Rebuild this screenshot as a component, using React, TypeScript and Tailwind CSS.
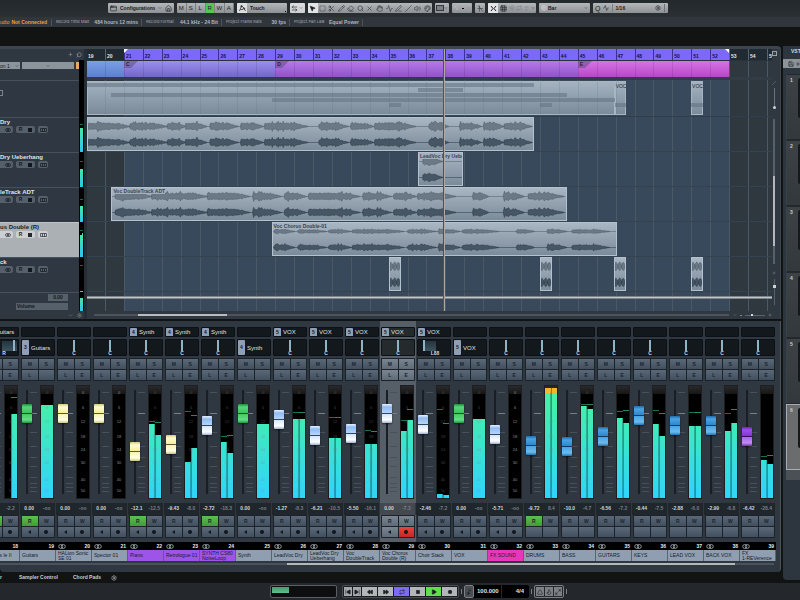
import React from 'react';
import {
  Activity, AppWindow, ArrowLeftRight, ChevronDown, Circle, Eraser, FastForward, Flame, Grid3x3, Hand, Home,
  Magnet, Maximize2, MousePointer2, Music2, Palette, PenLine, Pencil, Play, Plus, Repeat, Rewind,
  Save, Scissors, Search, Settings, SkipBack, SkipForward, Slash, Square, SquareDashed, Triangle, Type, Volume2, X,
} from 'lucide-react';

// Visible part of the timeline, in bars
const FIRST = 19.05;
const LAST = 55.27;
const BAR_PX = 19;
const BARS = Array.from({ length: 37 }, (_, i) => 19 + i);

const pct = (bar: number) => `${((bar - FIRST) / (LAST - FIRST)) * 100}%`;
const span = (from: number, to: number) => ({ left: pct(Math.max(from, FIRST)), width: `${((to - Math.max(from, FIRST)) / (LAST - FIRST)) * 100}%` });

type Clip = { from: number; to: number; title?: string; amp: [number, number]; segs: number[][] };
type Track = { name: string; level: number[]; peak: number; selected?: boolean; clips: Clip[] };

const SHORT = [[0, 4], [4, 8], [8, 12]];

const TRACKS: Track[] = [
  {
    name: 'Dry', level: [24, 24], peak: 7,
    clips: [{
      from: 19.05, to: 42.7, amp: [4, 4],
      segs: [[0, 42], [42, 80], [80, 98], [98, 120], [123, 152], [154, 177], [178, 222], [233, 263], [265, 288], [289, 331], [344, 364], [375, 397], [399, 420], [420, 448]],
    }],
  },
  {
    name: 'Dry Ueberhang', level: [18, 18], peak: 9,
    clips: [{ from: 36.55, to: 38.95, title: 'LeadVoc Dry Uebe', amp: [4, 4], segs: [[4, 25]] }],
  },
  {
    name: 'leTrack ADT', level: [16, 16], peak: 12,
    clips: [{
      from: 20.34, to: 44.42, title: 'Voc DoubleTrack ADT', amp: [4, 4],
      segs: [[3, 40], [40, 96], [96, 139], [142, 171], [174, 196], [198, 250], [253, 282], [284, 307], [308, 347], [364, 380], [395, 416], [420, 456]],
    }],
  },
  {
    name: 'us Double (R)', level: [22, 24], peak: 8, selected: true,
    clips: [{
      from: 28.81, to: 47.06, title: 'Voc Chorus Double-01', amp: [2, 3],
      segs: [[1, 22], [25, 54], [56, 79], [80, 132], [136, 165], [167, 189], [191, 228], [246, 264], [277, 297], [302, 340]],
    }],
  },
  {
    name: 'ck', level: [1, 1], peak: 8,
    clips: [
      { from: 35, to: 35.63, amp: [5, 5], segs: SHORT },
      { from: 42.99, to: 43.62, amp: [5, 5], segs: SHORT },
      { from: 46.94, to: 47.57, amp: [5, 5], segs: SHORT },
      { from: 50.99, to: 51.62, amp: [5, 5], segs: SHORT },
    ],
  },
];

const SECTIONS = [
  { from: 19.05, to: 21, tag: '', color: 'from-[#7c9ee8] to-[#5c80cc]' },
  { from: 21, to: 29, tag: 'C', color: 'from-[#9b90ee] to-[#7266c8]' },
  { from: 29, to: 45, tag: 'D', color: 'from-[#b878ea] to-[#8d55c8]' },
  { from: 45, to: 53, tag: 'E', color: 'from-[#d873e6] to-[#b548c8]' },
];

const FOLDER_PARTS = [
  { from: 19.05, to: 42.7, y: 'top-[3px]' },
  { from: 36.55, to: 38.95, y: 'top-[8px]' },
  { from: 20.34, to: 44.42, y: 'top-[13px]' },
  { from: 28.81, to: 46.95, y: 'top-[18px]' },
  { from: 35, to: 35.63, y: 'top-[23px]' },
  { from: 42.99, to: 43.62, y: 'top-[23px]' },
  { from: 46.95, to: 47.56, y: 'top-[23px]' },
  { from: 50.99, to: 51.6, y: 'top-[23px]' },
];

type Channel = {
  no: number; name: string; fader: number; color: string; vol: string; pk: string;
  l?: number; r?: number; pl?: number; pr?: number; link?: string[]; folder?: string[];
  pan?: number; panText?: string; read?: boolean; rec?: boolean; selected?: boolean; fx?: boolean; clip?: boolean; tint?: string;
};

const SYNTH = ['4', 'Synth'];
const VOX = ['5', 'VOX'];
const PURPLE = 'bg-[#9c55e8]';

// fader, l/r and pl/pr are heights above the bottom of the strip
const CHANNELS: Channel[] = [
  { no: 18, name: 'Guitars le II', fader: 76, color: 'yellow', vol: '0.00', pk: '-2.2', l: 0, r: 84, pr: 100, link: ['3', 'Guitars'], pan: 97, panText: 'R', read: true },
  { no: 19, name: 'Guitars', fader: 76, color: 'green', vol: '0.00', pk: '-oo', l: 93, folder: ['3', 'Guitars'], read: true },
  { no: 20, name: 'HALion Sonic SE 01', fader: 76, color: 'yellow', vol: '0.00', pk: '-oo' },
  { no: 21, name: 'Spector 01', fader: 76, color: 'yellow', vol: '0.00', pk: '-oo' },
  { no: 22, name: 'Piano', fader: 38, color: 'yellow', vol: '-12.1', pk: '-12.5', l: 74, r: 63, pl: 76, pr: 75, link: SYNTH, read: true, tint: PURPLE },
  { no: 23, name: 'Retrologue 01', fader: 45, color: 'yellow', vol: '-9.43', pk: '-8.0', l: 36, r: 50, pl: 86, pr: 82, link: SYNTH, tint: PURPLE },
  { no: 24, name: 'SYNTH CS80 NoiseLoop', fader: 64, color: 'sky', vol: '-2.72', pk: '-18.3', l: 56, r: 45, pl: 61, pr: 62, link: SYNTH, read: true, tint: PURPLE },
  { no: 25, name: 'Synth', fader: 76, color: 'green', vol: '0.00', pk: '-oo', l: 74, folder: SYNTH },
  { no: 26, name: 'LeadVoc Dry', fader: 70, color: 'sky', vol: '-1.27', pk: '-8.3', l: 79, r: 79, pl: 85, pr: 85, link: VOX },
  { no: 27, name: 'LeadVoc Dry Ueberhang', fader: 54, color: 'sky', vol: '-6.21', pk: '-10.5', l: 60, r: 60, pl: 80, pr: 80, link: VOX },
  { no: 28, name: 'Voc DoubleTrack', fader: 56, color: 'sky', vol: '-5.50', pk: '-16.1', l: 54, r: 54, pl: 67, pr: 66, link: VOX },
  { no: 29, name: 'Voc Chorus Double (R)', fader: 76, color: 'sky', vol: '0.00', pk: '-7.3', l: 67, r: 78, pl: 77, pr: 88, link: VOX, rec: true, selected: true },
  { no: 30, name: 'Choir Stack', fader: 65, color: 'sky', vol: '-2.46', pk: '-7.2', l: 4, r: 3, pl: 88, pr: 74, link: VOX, pan: 12, panText: 'L88' },
  { no: 31, name: 'VOX', fader: 76, color: 'green', vol: '0.00', pk: '-oo', l: 79, folder: VOX },
  { no: 32, name: 'FX SOUND', fader: 55, color: 'sky', vol: '-5.71', pk: '-oo', tint: 'bg-[#e838b8]' },
  { no: 33, name: 'DRUMS', fader: 44, color: 'blue', vol: '-9.72', pk: '8.4', l: 110, r: 110, read: true, fx: true, clip: true },
  { no: 34, name: 'BASS', fader: 43, color: 'blue', vol: '-10.0', pk: '-4.7', l: 92, r: 89, pl: 93, pr: 93, fx: true },
  { no: 35, name: 'GUITARS', fader: 53, color: 'blue', vol: '-6.56', pk: '-7.2', l: 80, r: 75, pl: 86, pr: 87, fx: true },
  { no: 36, name: 'KEYS', fader: 74, color: 'blue', vol: '-0.44', pk: '-7.5', l: 74, r: 62, pl: 87, pr: 84, fx: true },
  { no: 37, name: 'LEAD VOX', fader: 64, color: 'blue', vol: '-2.88', pk: '-6.0', l: 72, r: 72, pl: 85, pr: 85, fx: true },
  { no: 38, name: 'BACK VOX', fader: 64, color: 'blue', vol: '-2.99', pk: '-6.8', l: 67, r: 75, pl: 84, pr: 88, fx: true },
  { no: 39, name: 'FX\n1-REVerence', fader: 53, color: 'purple', vol: '-6.42', pk: '-28.4', l: 38, r: 34, pl: 41, pr: 42, fx: true },
];

const THUMBS: Record<string, string> = {
  green: '[&::-webkit-slider-thumb]:bg-[linear-gradient(#1f8a40,#54d678_16%,#3fbf60_46%,#145528_47%,#145528_53%,#45c968_54%,#5ee084_84%,#238f45)]',
  yellow: '[&::-webkit-slider-thumb]:bg-[linear-gradient(#d8cc78,#fffbd0_16%,#f6ef9c_46%,#5c5830_47%,#5c5830_53%,#f8f3b4_54%,#ffffe4_84%,#cfc67c)]',
  sky: '[&::-webkit-slider-thumb]:bg-[linear-gradient(#e8f2ff,#8fbcf4_16%,#b4d4fa_46%,#33465c_47%,#33465c_53%,#d4e6fb_54%,#ffffff_84%,#a0b4d4)]',
  blue: '[&::-webkit-slider-thumb]:bg-[linear-gradient(#1f6cab,#4aa3e2_16%,#2f88cc_46%,#103a5c_47%,#103a5c_53%,#4ba4e0_54%,#6bbcf0_84%,#2674b0)]',
  purple: '[&::-webkit-slider-thumb]:bg-[linear-gradient(#6a28b4,#9e50ee_16%,#8134d4_46%,#34105c_47%,#34105c_53%,#a866ee_54%,#c08cf6_84%,#6e34ac)]',
};

const SCALE = [['0', 'top-[4px]'], ['6', 'top-[19px]'], ['12', 'top-[33px]'], ['18', 'top-[48px]'], ['24', 'top-[61px]'], ['30', 'top-[74px]'], ['40', 'top-[91px]'], ['50', 'top-[102px]']];
const TICKS = [7, 28, 47, 61, 72, 81, 92, 98, 102, 106];

const noise = (n: number) => {
  const v = Math.sin(n * 12.9898) * 43758.5453;
  return v - Math.floor(v);
};

function wavePath(segs: number[][], mid: number, amp: number) {
  let d = '';
  segs.forEach(([a, b]) => {
    const top: string[] = [];
    const bottom: string[] = [];
    const fade = Math.min(14, (b - a) * 0.4);
    for (let x = a; x <= b; x += 1) {
      const env = Math.min(1, (x - a + 1) / 2) * Math.min(1, (b - x) / fade);
      const h = amp * env * (0.55 + noise(x + a) * 0.35 + (noise(x * 3 + a) > 0.88 ? 0.4 : 0)) + 0.2;
      top.push(`${x},${(mid - h).toFixed(1)}`);
      bottom.unshift(`${x},${(mid + h * (0.8 + noise(x) * 0.2)).toFixed(1)}`);
    }
    d += `M${top.concat(bottom).join('L')}Z`;
  });
  return d;
}

function ClipBox({ clip }: { clip: Clip }) {
  const w = (clip.to - clip.from) * BAR_PX;
  return (
    <div style={span(clip.from, clip.to)} className="absolute top-0 h-[34px] overflow-hidden border border-[#b4c1ce] bg-linear-to-b from-[#a9b6c4] to-[#7c8b9a]">
      <svg viewBox={`0 0 ${w} 32`} preserveAspectRatio="none" className="absolute inset-0 w-full h-full">
        <path d={`M0 8.5H${w}`} stroke="#596675" strokeWidth="0.6" />
        <path d={`M0 24.5H${w}`} stroke="#394653" strokeWidth="0.6" />
        <path d={wavePath(clip.segs, 8.5, clip.amp[0])} fill="#6b7987" stroke="#4d5965" strokeWidth="0.5" />
        <path d={wavePath(clip.segs, 24.5, clip.amp[1])} fill="#465665" stroke="#2b3640" strokeWidth="0.5" />
      </svg>
      {clip.title && <span className="absolute left-0 top-0 pl-px bg-[#a3b0be] text-[5px] leading-[6px] font-bold text-[#39444f] whitespace-nowrap">{clip.title}</span>}
    </div>
  );
}

function TrackHead({ track }: { track: Track }) {
  const btn = track.selected ? 'bg-[#cdd0d2] text-[#22282e]' : 'bg-[#56606a] text-[#12171c]';
  return (
    <div className="flex h-[35px]">
      <div className={`flex-1 min-w-0 border-t ${track.selected ? 'bg-[#abb0b4] border-[#c0c4c8]' : 'bg-[#2f3842] border-[#47515c]'}`}>
        <p className={`text-[6px] leading-[8px] font-bold whitespace-nowrap ${track.selected ? 'text-[#1b2024]' : 'text-[#dfe3e6]'}`}>{track.name}</p>
        <div className="flex gap-[3px] h-[7px]">
          <button aria-label="Stereo" className={`w-[13px] rounded-r-xs flex items-center justify-end pr-[2px] ${btn}`}><StereoIcon className="w-[6px] h-[4px]" /></button>
          <button className={`w-[19px] rounded-xs flex items-center justify-around text-[5px] leading-none font-bold ${btn}`}>R<span className="w-[4px] h-[4px] bg-current" /></button>
          <button aria-label="Lanes" className={`w-[10px] rounded-xs flex items-center justify-center ${btn}`}>
            <svg viewBox="0 0 14 8" className="w-[7px] h-[4px]" fill="none" stroke="currentColor" strokeWidth="1.4"><path d="M1 1H13V7H1ZM5 1V7M9 1V7" /></svg>
          </button>
        </div>
      </div>
      <Level level={track.level} peak={track.peak} />
    </div>
  );
}

function Level({ level, peak }: { level: number[]; peak?: number }) {
  return (
    <div className="relative w-[5px] bg-black flex items-end justify-center px-px">
      {level.map((h, i) => <span key={i} style={{ height: h }} className="flex-1 bg-linear-to-t from-[#2fc4ee] to-[#45e6a4]" />)}
      {peak && <span style={{ top: peak }} className="absolute inset-x-px h-px bg-[#1c6650]" />}
    </div>
  );
}

function StereoIcon({ className }: { className: string }) {
  return (
    <svg viewBox="0 0 16 10" className={className} fill="none" stroke="currentColor" strokeWidth="1.8">
      <circle cx="5.5" cy="5" r="4" /><circle cx="10.5" cy="5" r="4" />
    </svg>
  );
}

const GROUP = 'flex h-[10px] items-center rounded-[1px] bg-linear-to-b from-[#b4b8ba] to-[#8d9194] text-[#1a1d20] overflow-hidden';
const IC = 'w-[7px] h-[7px] shrink-0';

function Toolbar() {
  const tools = [MousePointer2, SquareDashed, Scissors, Pencil, Eraser, Search, X, Hand, Activity, PenLine, Slash, Volume2, Palette];
  const names = ['Select', 'Range', 'Split', 'Draw', 'Erase', 'Zoom', 'Mute', 'Comp', 'Time warp', 'Pen', 'Line', 'Play', 'Color'];
  return (
    <header className="flex h-[17px] items-start gap-[3px] pt-[3px] pl-[108px] bg-linear-to-b from-[#23282b] to-[#2b3034]">
      <div className={`${GROUP} w-[66px] gap-[3px] px-[2px]`}>
        <AppWindow className={IC} />
        <select aria-label="Configurations" className="appearance-none flex-1 min-w-0 text-[5px] font-bold leading-[8px]"><option>Configurations</option></select>
        <ChevronDown className="w-[4px] h-[4px] shrink-0" />
        <Home className={IC} />
      </div>
      <div className={`${GROUP} w-[57px]`}>
        {['M', 'S', 'L', 'R', 'W', 'A'].map(s => (
          <button key={s} className={`flex-1 h-full text-[6px] leading-none border-r border-[#7c8083] ${s === 'R' ? 'bg-[#4fca4f]' : ''}`}>{s}</button>
        ))}
      </div>
      <div className={`${GROUP} w-[50px]`}>
        <button aria-label="Automation" className="flex h-full w-[10px] items-center justify-center bg-[#dcdedf]">
          <svg viewBox="0 0 14 14" className={IC} fill="none" stroke="currentColor" strokeWidth="1.4"><path d="M1 12L5 2L9 5L13 12M3 9H8" /><circle cx="5" cy="2.4" r="1.4" /><circle cx="10" cy="7" r="1.4" /></svg>
        </button>
        <select aria-label="Automation mode" className="appearance-none flex-1 min-w-0 pl-[3px] text-[5px] font-bold leading-[8px]"><option>Touch</option></select>
        <span className="w-px h-px mt-[7px] mr-px bg-black" />
      </div>
      <div className={`${GROUP} w-[15px] from-[#dcdedf] to-[#cccecf]`}><ArrowLeftRight className={`${IC} ml-px`} /><ChevronDown className="w-[4px] h-[4px] ml-px" /></div>
      <div className={`${GROUP} w-[124px]`}>
        {tools.map((Tool, i) => (
          <button key={names[i]} aria-label={names[i]} className={`flex flex-1 h-full items-center justify-center ${i === 0 ? 'bg-[#e2e4e5]' : ''}`}>
            <Tool className={`${IC} ${i === 0 ? 'fill-current' : 'text-[#33383c]'}`} />
          </button>
        ))}
      </div>
      <div className={`${GROUP} w-[14px]`}><span className="w-[8px] h-[6px] ml-px border border-[#33383c] bg-[#7b8084]" /><ChevronDown className="w-[4px] h-[4px]" /></div>
      <div className={`${GROUP} w-[20px] gap-[3px] px-[2px] text-[#70757a]`}><Activity className="w-[6px] h-[6px] text-[#c8cbcd]" /><span className="w-[3px] h-px bg-black" /><ChevronDown className="w-[4px] h-[4px]" /></div>
      <div className={`${GROUP} w-[10px] justify-center`}>
        <svg viewBox="0 0 14 14" className={IC} fill="none" stroke="#3c4145" strokeWidth="1.3"><path d="M2 1L12 13M5 1V13M1 7H12" /></svg>
      </div>
      <div className={`${GROUP} w-[48px] justify-between pr-px`}>
        <button aria-label="Snap" className="flex h-full w-[10px] items-center justify-center bg-[#e2e4e5]">
          <svg viewBox="0 0 14 14" className={IC} fill="none" stroke="currentColor" strokeWidth="2"><path d="M2 2L6 7L2 12M12 2L8 7L12 12" /></svg>
        </button>
        <Grid3x3 className={IC} /><Magnet className="w-[6px] h-[6px] text-[#7c8184]" /><Repeat className="w-[6px] h-[6px] text-[#7c8184]" /><Type className="w-[5px] h-[5px] text-[#7c8184]" /><ChevronDown className="w-[4px] h-[4px]" />
      </div>
      <div className={`${GROUP} w-[51px] px-[2px]`}>
        <Grid3x3 className="w-[6px] h-[6px] text-[#d2d5d7]" />
        <select aria-label="Grid type" className="appearance-none flex-1 min-w-0 pl-px text-[5px] font-bold leading-[8px]"><option>Bar</option></select>
        <ChevronDown className="w-[4px] h-[4px]" />
      </div>
      <div className={`${GROUP} w-[75px] px-[2px]`}>
        <span className="text-[7px] leading-none">Q</span>
        <Activity className="w-[6px] h-[6px] mx-[3px]" />
        <select aria-label="Quantize" className="appearance-none flex-1 min-w-0 pl-[2px] border-l border-[#7c8083] text-[5px] font-bold leading-[8px]"><option>1/16</option></select>
        <Settings className="w-[6px] h-[6px]" />
        <span className="w-px h-[8px] ml-[3px] mr-px bg-[#6d7174]" />
      </div>
    </header>
  );
}

function InfoLine() {
  const items = [
    ['Record Time Max', '484 hours 12 mins', 'w-[90px]'],
    ['Record Format', '44.1 kHz - 24 Bit', 'w-[80px]'],
    ['Project Frame Rate', '30 fps', 'w-[68px]'],
    ['Project Pan Law', 'Equal Power', 'w-[73px]'],
  ];
  return (
    <div className="flex h-[10px] items-center bg-[#30363b] text-[5px] leading-none whitespace-nowrap">
      <div className="flex w-[52px] h-[7px] items-center justify-between pr-1 border-r border-[#4c5358] font-bold text-[#f0a030]"><span className="font-normal">udio</span><span>Not Connected</span></div>
      {items.map(([label, value, w]) => (
        <div key={label} className={`flex h-[7px] items-center justify-between pl-1 pr-[3px] border-r border-[#4c5358] ${w}`}>
          <span className="font-['Inter',sans-serif] text-[4px] text-[#a2adb7]">{label}</span>
          <span className="font-bold text-[#a9b7c2]">{value}</span>
        </div>
      ))}
    </div>
  );
}

function TrackList() {
  return (
    <div className="w-[84px] shrink-0 overflow-hidden">
      <div className="flex h-[11px] items-center justify-end gap-[3px] pr-[2px] text-[#a8b0b6]"><Plus className="w-[5px] h-[5px]" /><Search className="w-[6px] h-[6px] -scale-x-100" /></div>
      <div className="flex h-[20px]">
        <div className="flex flex-1 gap-[2px] pt-[2px] text-[5px] leading-[6px]">
          <div className="flex w-[20px] h-[7px] items-center justify-between pr-px bg-[#8c949b] text-[#14191d]">on 1<ChevronDown className="w-[4px] h-[4px]" /></div>
          <div className="flex flex-1 h-[7px] items-center justify-center bg-[#8c949b] text-[#14191d]"><ChevronDown className="w-[4px] h-[4px]" /></div>
          <span className="w-[3px] h-[7px] bg-[#e8a860]" />
        </div>
        <div className="w-[5px] bg-black" />
      </div>
      <div className="flex h-[37px]">
        <div className="flex-1 border-t border-[#47515c] bg-[#2f3842] pt-[9px]"><div className="w-[3px] h-[6px] border border-l-0 border-[#7b848c]" /></div>
        <div className="w-[5px] bg-black" />
      </div>
      {TRACKS.map(t => <TrackHead key={t.name} track={t} />)}
      <div className="flex h-[19px]">
        <div className="flex flex-1 flex-col items-end gap-[2px] border-t border-[#47515c] bg-[#2f3842] pt-px pr-[11px] text-[5px] leading-[7px] font-bold text-[#14191d]">
          <span className="w-[20px] h-[7px] bg-[#56606a] text-center">0.00</span>
          <span className="w-[52px] h-[7px] bg-[#56606a] pl-px">Volume</span>
        </div>
        <Level level={[13, 13]} />
      </div>
      <div className="flex h-[8px] items-center justify-end gap-[4px] pr-[2px] text-[#8a939a]"><ChevronDown className="w-[5px] h-[5px]" /><Settings className="w-[5px] h-[5px]" /></div>
    </div>
  );
}

function Timeline() {
  return (
    <div className="flex-1 min-w-0">
      <div className="relative h-[262px] overflow-hidden bg-[#2f373f]">
        <div style={span(21, 53)} className="absolute inset-y-0 bg-[#38495b]" />
        {BARS.slice(1).map(b => <span key={b} style={{ left: pct(b) }} className="absolute inset-y-0 w-px bg-[#4a5966]" />)}

        {/* Ruler */}
        <div className="relative h-[11px] bg-[#1f2a33]">
          <div style={span(21, 53)} className="absolute inset-y-0 bg-[#7c69fc]" />
          {BARS.map(b => (
            <span key={b} style={{ left: pct(b) }} className={`absolute bottom-0 h-[11px] border-l pl-px pt-[4px] text-[5px] leading-[7px] font-bold ${b >= 21 && b < 53 ? 'border-[#3a2fa0] text-[#18123c]' : 'border-[#59636c] text-[#e0e4e8]'}`}>{b}</span>
          ))}
          <svg style={{ left: pct(21) }} viewBox="0 0 4 4" className="absolute top-0 w-1 h-1"><path d="M0 0H4L0 4Z" fill="#fff" /></svg>
          <svg style={{ left: pct(53) }} viewBox="0 0 4 4" className="absolute top-0 -ml-1 w-1 h-1"><path d="M0 0H4V4Z" fill="#fff" /></svg>
        </div>

        {/* Arranger track */}
        <div className="relative h-[17px] border-t border-[#2a3138]">
          {SECTIONS.map(s => (
            <div key={s.from} style={span(s.from, s.to)} className={`absolute inset-y-0 bg-linear-to-b ${s.color}`}>
              {s.tag && <><svg viewBox="0 0 14 7" className="absolute left-0 top-0 w-[14px] h-[7px]"><path d="M0 0H14L7 7H0Z" fill="#5a4a78" fillOpacity="0.5" /></svg><span className="relative block pl-[2px] text-[5px] leading-[7px] font-bold text-[#2c2040]">{s.tag}</span></>}
            </div>
          ))}
          {BARS.slice(1, 34).map(b => <span key={b} style={{ left: pct(b) }} className="absolute inset-y-0 w-px bg-black/10" />)}
        </div>
        <div className="relative h-[3px] bg-[#333c45]" />

        {/* Folder */}
        <div className="relative h-[37px] border-b border-[#303e4c]">
          {[[19.05, 46.95], [46.95, 47.56], [50.99, 51.6]].map(([a, b], i) => (
            <div key={a} style={span(a, b)} className="absolute top-px h-[34px] border border-[#a8b6c4] bg-linear-to-b from-[#a5b3c1] to-[#7b8b9a] text-[5px] leading-[8px] text-[#1f2830]">{i > 0 ? 'VOC' : ''}</div>
          ))}
          {FOLDER_PARTS.map((p, i) => <div key={i} style={span(p.from, p.to)} className={`absolute h-[4px] bg-[#647584]/60 ${p.y}`} />)}
          {BARS.slice(1, 29).map(b => <span key={b} style={{ left: pct(b) }} className="absolute inset-y-0 w-px bg-[#5c6c7c]/20" />)}
        </div>

        {TRACKS.map(t => (
          <div key={t.name} className="relative h-[35px] border-b border-[#34434f]">
            {t.clips.map(c => <ClipBox key={c.from} clip={c} />)}
          </div>
        ))}
        <div className="relative h-[19px] pt-[4px]"><div className="h-[3px] border-y border-[#7b848b] bg-[#c3c6c8]" /></div>

        {/* Playhead */}
        <span style={{ left: pct(37.9) }} className="absolute inset-y-0 w-[2px] border-l border-[#57504b] bg-[#b0a8a0]" />
      </div>
      <div className="flex h-[8px] items-center pl-[7px]">
        <div className="flex flex-1 h-[2px] bg-[#4b545c]"><div className="ml-[7%] w-[14%] bg-[#b9bcbe]" /></div>
        <div className="flex w-[43px] items-center justify-end gap-[3px] text-[#a8adb1]"><ChevronDown className="w-[4px] h-[4px]" /><span className="w-[2px] h-px bg-[#7d858c]" /><span className="flex w-[20px] h-px items-center pl-[6px] bg-[#5a636b]"><span className="w-[2px] h-[2px] bg-[#d0d3d5]" /></span><Plus className="w-[4px] h-[4px]" /></div>
      </div>
    </div>
  );
}

function ScrollColumn() {
  return (
    <div className="flex w-[8px] flex-col items-center pr-[4px] text-[#9aa2a8]">
      <button aria-label="Ruler options" className="mt-[2px] flex h-[5px] w-[5px] items-center justify-center border border-current"><ChevronDown className="w-[3px] h-[3px]" /></button>
      <Slash className="mt-[25px] w-[4px] h-[4px]" />
      <div className="mt-[3px] flex h-[21px] w-px items-end justify-center bg-[#68727a]"><span className="w-[3px] h-[3px] shrink-0 rounded-full bg-[#cdd1d4]" /></div>
      <div className="mt-[10px] h-[145px] w-[2px] bg-[#56606a] pt-[57px]"><div className="h-[70px] bg-[#b4b6bb]" /></div>
      <Plus className="mt-[7px] w-[4px] h-[4px]" />
      <div className="mt-[4px] h-[26px] w-px bg-[#56606a] pt-[6px]"><div className="h-[3px] w-[3px] -ml-px bg-[#cdd1d4]" /></div>
    </div>
  );
}

function Chip({ link, tall }: { link: string[]; tall?: boolean }) {
  return (
    <div className="flex h-full items-center gap-[2px] text-[6px] leading-none text-[#dfe4e8]">
      <span className={`flex w-[7px] items-center justify-center rounded-[1px] bg-[#8fa0b5] text-[5px] font-bold text-[#141c26] ${tall ? 'h-[15px]' : 'h-[9px]'}`}>{link[0]}</span>
      {link[1]}
    </div>
  );
}

function Pan({ ch }: { ch: Channel }) {
  const pan = ch.pan ?? 50;
  return (
    <label className="relative flex h-full flex-col items-center text-[5px] leading-[5px] font-bold text-[#cfd6dc]">
      {pan !== 50 && <span style={{ left: pan < 50 ? `${pan + 6}%` : '50%', width: `${Math.abs(50 - pan)}%` }} className="absolute top-px h-[10px] bg-linear-to-b from-[#24343e] to-[#3c5460]" />}
      <input type="range" readOnly min={0} max={100} value={pan} className="relative block w-[28px] h-[11px] appearance-none bg-transparent [&::-webkit-slider-thumb]:appearance-none [&::-webkit-slider-thumb]:w-[2px] [&::-webkit-slider-thumb]:h-[11px] [&::-webkit-slider-thumb]:bg-[#8fb4c8]" />
      <span className={pan < 50 ? 'pl-[2px]' : pan > 50 ? 'pl-[4px]' : ''}>{ch.panText ?? 'C'}</span>
    </label>
  );
}

const PAD = 'flex items-center justify-center text-[5px] leading-none font-bold text-[#1b242d]';
const PAD_BG = 'bg-linear-to-b from-[#5a6877] to-[#414f5e]';
const PAD_LIT = 'bg-linear-to-b from-[#7a8591] to-[#5f6b78]';

function Strip({ ch }: { ch: Channel }) {
  const pad = `${PAD} ${ch.selected ? PAD_LIT : PAD_BG}`;
  const box = `mx-px rounded-[1px] border border-[#0d1115] overflow-hidden ${ch.selected ? 'bg-[#252a2c]' : 'bg-[#13181d]'}`;
  const bars = ch.l === undefined ? [] : ch.r === undefined ? [ch.l] : [ch.l, ch.r];
  return (
    <div className={`w-9 shrink-0 ${ch.selected ? 'bg-[#565e67]' : ''}`}>
      <div className={`${box} mt-[6px] h-[10px]`}>{ch.link && <Chip link={ch.link} />}</div>
      <div className={`${box} mt-[2px] h-[17px]`}>{ch.folder ? <Chip link={ch.folder} tall /> : <Pan ch={ch} />}</div>

      <div className="mx-px mt-[2px] grid h-[23px] grid-cols-2 grid-rows-2 gap-px rounded-[1px] bg-[#1b2229] p-px">
        {['M', 'S', 'L', ch.folder ? '' : 'E'].map((s, i) => <button key={i} className={pad}>{s}</button>)}
      </div>

      <div className="relative mt-[4px] flex h-[114px] justify-between pl-[2px] pr-[2px]">
        <svg viewBox="0 0 16 114" className="absolute left-[2px] top-0 w-[16px] h-[114px]">
          <rect x="4" y="5" width="2" height="104" fill="#191f24" />
          {TICKS.map(y => <rect key={y} x="8" y={y} width="7" height="1" fill={y === 28 ? '#76808a' : '#47515b'} />)}
        </svg>
        <input
          type="range" readOnly aria-label={`${ch.name} level`} min={0} max={95} value={ch.fader}
          className={`relative block w-[10px] h-[114px] appearance-none bg-transparent [writing-mode:vertical-lr] [direction:rtl] [&::-webkit-slider-thumb]:appearance-none [&::-webkit-slider-thumb]:w-[10px] [&::-webkit-slider-thumb]:h-[19px] [&::-webkit-slider-thumb]:rounded-[1px] [&::-webkit-slider-thumb]:shadow-[0_1px_2px_#0008] ${THUMBS[ch.color]}`}
        />
        <div className="relative h-[114px] w-[14px] border border-[#1c1f22] bg-black">
          <div className="absolute inset-x-0 top-0 h-[8px] bg-linear-to-b from-[#2a2a2a] to-[#161616]" />
          <div className="absolute inset-0 flex items-end">
            {bars.map((h, i) => (
              <span key={i} style={{ height: h }} className={`flex-1 bg-[linear-gradient(to_top,#30d4fc,#3ee8c0_60%,#48f59c)] bg-[length:100%_112px] bg-bottom ${i ? 'border-l border-[#1c9aa0]' : ''}`}>
                {ch.clip && <span className="block h-[5px] bg-[#f5b52c]" />}
              </span>
            ))}
          </div>
          {ch.no < 35 && SCALE.map(([s, top]) => <span key={s} className={`absolute inset-x-0 text-center text-[4px] leading-[5px] ${top} ${bars.length ? 'text-[#7d878d]/50' : 'text-[#8a8f94]'}`}>{s}</span>)}
          {ch.pl !== undefined && <span style={{ bottom: ch.pl }} className="absolute left-0 w-[6px] h-px bg-[#1c6e54]" />}
          {ch.pr !== undefined && <span style={{ bottom: ch.pr }} className="absolute right-0 w-[6px] h-px bg-[#1f8a66]" />}
        </div>
      </div>

      <div className={`mt-[4px] flex h-[12px] items-center justify-around text-[5px] font-bold border-r border-[#30383f] ${ch.selected ? 'bg-[#43494f]' : 'bg-[#20272c]'}`}>
        <span className="text-[#ccd1d5]">{ch.vol}</span><span className="text-[#767e85]">{ch.pk}</span>
      </div>

      <div className="mx-px grid h-[23px] grid-cols-2 grid-rows-2 gap-px rounded-[1px] bg-[#1b2229] p-px">
        <button className={ch.read ? `${PAD} bg-linear-to-b from-[#5cc050] to-[#3f9c38]` : pad}>R</button>
        <button className={pad}>W</button>
        <button aria-label="Monitor" className={pad}>{!ch.fx && <svg viewBox="0 0 4 5" className="w-[3px] h-[4px]"><path d="M0 2.5L4 0V5Z" fill="#10161c" /></svg>}</button>
        <button aria-label="Record" className={ch.rec ? `${PAD} bg-linear-to-b from-[#e8443c] to-[#c42824]` : pad}>{!ch.fx && <span className="w-[4px] h-[4px] rounded-full bg-[#10161c]" />}</button>
      </div>

      <div className="mt-[4px] flex h-[8px] items-center justify-between bg-black px-[2px] text-[5px] leading-none font-bold text-[#e4e8ea]">
        {ch.folder ? <span /> : <StereoIcon className="w-[8px] h-[5px] text-[#9aa1a7]" />}{ch.no}
      </div>
      <div className={`flex h-[11px] items-center overflow-hidden border-r border-[#59656f] pl-[2px] text-[5px] leading-[5px] whitespace-pre-line text-[#18202a] ${ch.tint ?? 'bg-[#8f9fb1]'}`}>{ch.name}</div>
    </div>
  );
}

function Mixer() {
  return (
    <section className="mt-[2px] rounded-b-sm border-r border-[#4a545d] bg-[#2f3841] pr-[4px]">
      <div className="flex justify-end overflow-hidden">{CHANNELS.map(ch => <Strip key={ch.no} ch={ch} />)}</div>
      <div className="h-[11px] pt-[2px] pr-[2px]"><div className="flex h-[2px] justify-end bg-[#4a535b] pr-[5%]"><div className="w-[61%] bg-[#b4b6b8]" /></div></div>
    </section>
  );
}

function Rack() {
  return (
    <aside className="w-[17px] shrink-0 mb-[3px] overflow-hidden rounded-bl-sm bg-[#2d363f]">
      <p className="mt-[2px] pl-[8px] text-[5px] leading-[7px] font-bold text-[#d4d9dd]">VST</p>
      <div className="mt-[4px] flex h-[9px] w-[24px] items-center gap-px bg-[#8d9499] pl-[5px] text-[#14181b]"><Save className="w-[6px] h-[6px] shrink-0" /><Plus className="w-[6px] h-[6px] shrink-0" /></div>
      <div className="mt-[6px] ml-[3px] w-[60px] bg-[#3b4146]">
        {[1, 2, 3, 4, 5, 6].map(n => (
          <div key={n} className={`flex h-[66px] items-start gap-[5px] border pl-[3px] pt-[3px] text-[5px] leading-[5px] font-bold text-[#c8cdd1] ${n === 6 ? 'border-[#a9adb0] bg-[#6a6c6e]' : 'border-[#22282d] border-x-[#3b4146] bg-linear-to-b from-[#3d4246] to-[#33383c]'}`}>
            {n}<span className="h-[40px] w-[40px] rounded-[2px] bg-[#16191b]" />
          </div>
        ))}
        <div className="h-[10px] bg-[#4a5055]" />
      </div>
    </aside>
  );
}

function Transport() {
  const keys = [
    { name: 'Previous', icon: SkipBack, cls: 'w-[8px] bg-[#a5a9ad]' },
    { name: 'Next', icon: SkipForward, cls: 'w-[8px] bg-[#a5a9ad]' },
    { name: 'Rewind', icon: Rewind, cls: 'w-[15px] bg-[#b4b7ba]' },
    { name: 'Forward', icon: FastForward, cls: 'w-[15px] bg-[#b4b7ba]' },
    { name: 'Cycle', icon: Repeat, cls: 'w-[15px] bg-[#7c6cf4]' },
    { name: 'Stop', icon: Square, cls: 'w-[15px] bg-[#b4b7ba]' },
    { name: 'Play', icon: Play, cls: 'w-[15px] bg-[#5ee04c]' },
    { name: 'Record', icon: Circle, cls: 'w-[15px] bg-[#b4b7ba]' },
  ];
  return (
    <footer className="flex flex-1 min-h-[17px] items-start bg-[#24272b] pt-[2px] pl-[270px]">
      <div className="h-[13px] w-[67px] rounded-[2px] border border-[#5a5f64] bg-[#0c0e10] p-px"><div className="h-[6px] w-[17px] bg-linear-to-b from-[#4a9a70] to-[#5cc08c]" /></div>
      <div className="ml-[5px] flex h-[13px] gap-px rounded-[2px] border border-[#4a4e52] bg-[#1a1c1f] p-px">
        {keys.map(k => (
          <button key={k.name} aria-label={k.name} className={`flex items-center justify-center text-[#1c1f22] ${k.cls}`}>
            <k.icon className={`w-[6px] h-[6px] ${k.name === 'Cycle' ? '' : 'fill-current'} ${k.name === 'Stop' || k.name === 'Record' ? 'scale-75' : ''}`} />
          </button>
        ))}
      </div>
      <span className="mx-[2px] mt-[4px] h-[5px] w-px bg-[#7b8085]" />
      <div className="flex h-[13px] items-stretch rounded-[2px] bg-black text-[6px] font-bold text-[#dde1e4]">
        <button aria-label="Tempo track" className="flex w-[10px] items-center justify-center rounded-[2px] border border-[#7b8085] bg-[#4a4e52] text-[#101214]"><Music2 className="w-[6px] h-[6px]" /></button>
        <input aria-label="Tempo" readOnly value="100.000" className="w-[28px] pl-[3px] border-r border-[#24272b]" />
        <input aria-label="Time signature" readOnly value="4/4" className="w-[27px] pr-[5px] text-right" />
      </div>
      <span className="mx-[2px] mt-[4px] h-[5px] w-px bg-[#7b8085]" />
      <div className="flex h-[13px] items-center gap-px rounded-[2px] border border-[#7b8085] bg-[#24272b] px-px text-[#101214]">
        {[Triangle, Flame, Maximize2].map((Icon, i) => <button key={i} aria-label={['Click', 'Precount', 'Punch'][i]} className="flex h-[9px] w-[8px] items-center justify-center bg-[#7b8085]"><Icon className="w-[6px] h-[6px]" /></button>)}
      </div>
      <span className="mx-[2px] mt-[4px] h-[5px] w-px bg-[#7b8085]" />
    </footer>
  );
}

export default function App() {
  return (
    <div className="flex min-h-screen w-full flex-col overflow-hidden bg-[#111413] font-['Liberation_Sans',Arial,sans-serif]">
      <Toolbar />
      <InfoLine />
      <div className="h-[19px]" />
      <main className="flex">
        <div className="flex-1 min-w-0">
          <section className="flex rounded-tr-sm border-t-[3px] border-r border-[#3d464f] bg-[#2f3841]">
            <TrackList />
            <div className="w-[3px] shrink-0 bg-[#262e35]" />
            <Timeline />
            <ScrollColumn />
          </section>
          <Mixer />
          <nav className="flex h-[11px] items-center text-[5px] font-bold text-[#c9cdd0]">
            <a href="#editor" className="w-[19px]">r</a>
            <a href="#sampler" className="w-[54px]">Sampler Control</a>
            <a href="#chords" className="w-[38px]">Chord Pads</a>
            <button aria-label="Setup"><Settings className="w-[6px] h-[6px]" /></button>
          </nav>
        </div>
        <div className="w-[2px]" />
        <Rack />
      </main>
      <Transport />
    </div>
  );
}
